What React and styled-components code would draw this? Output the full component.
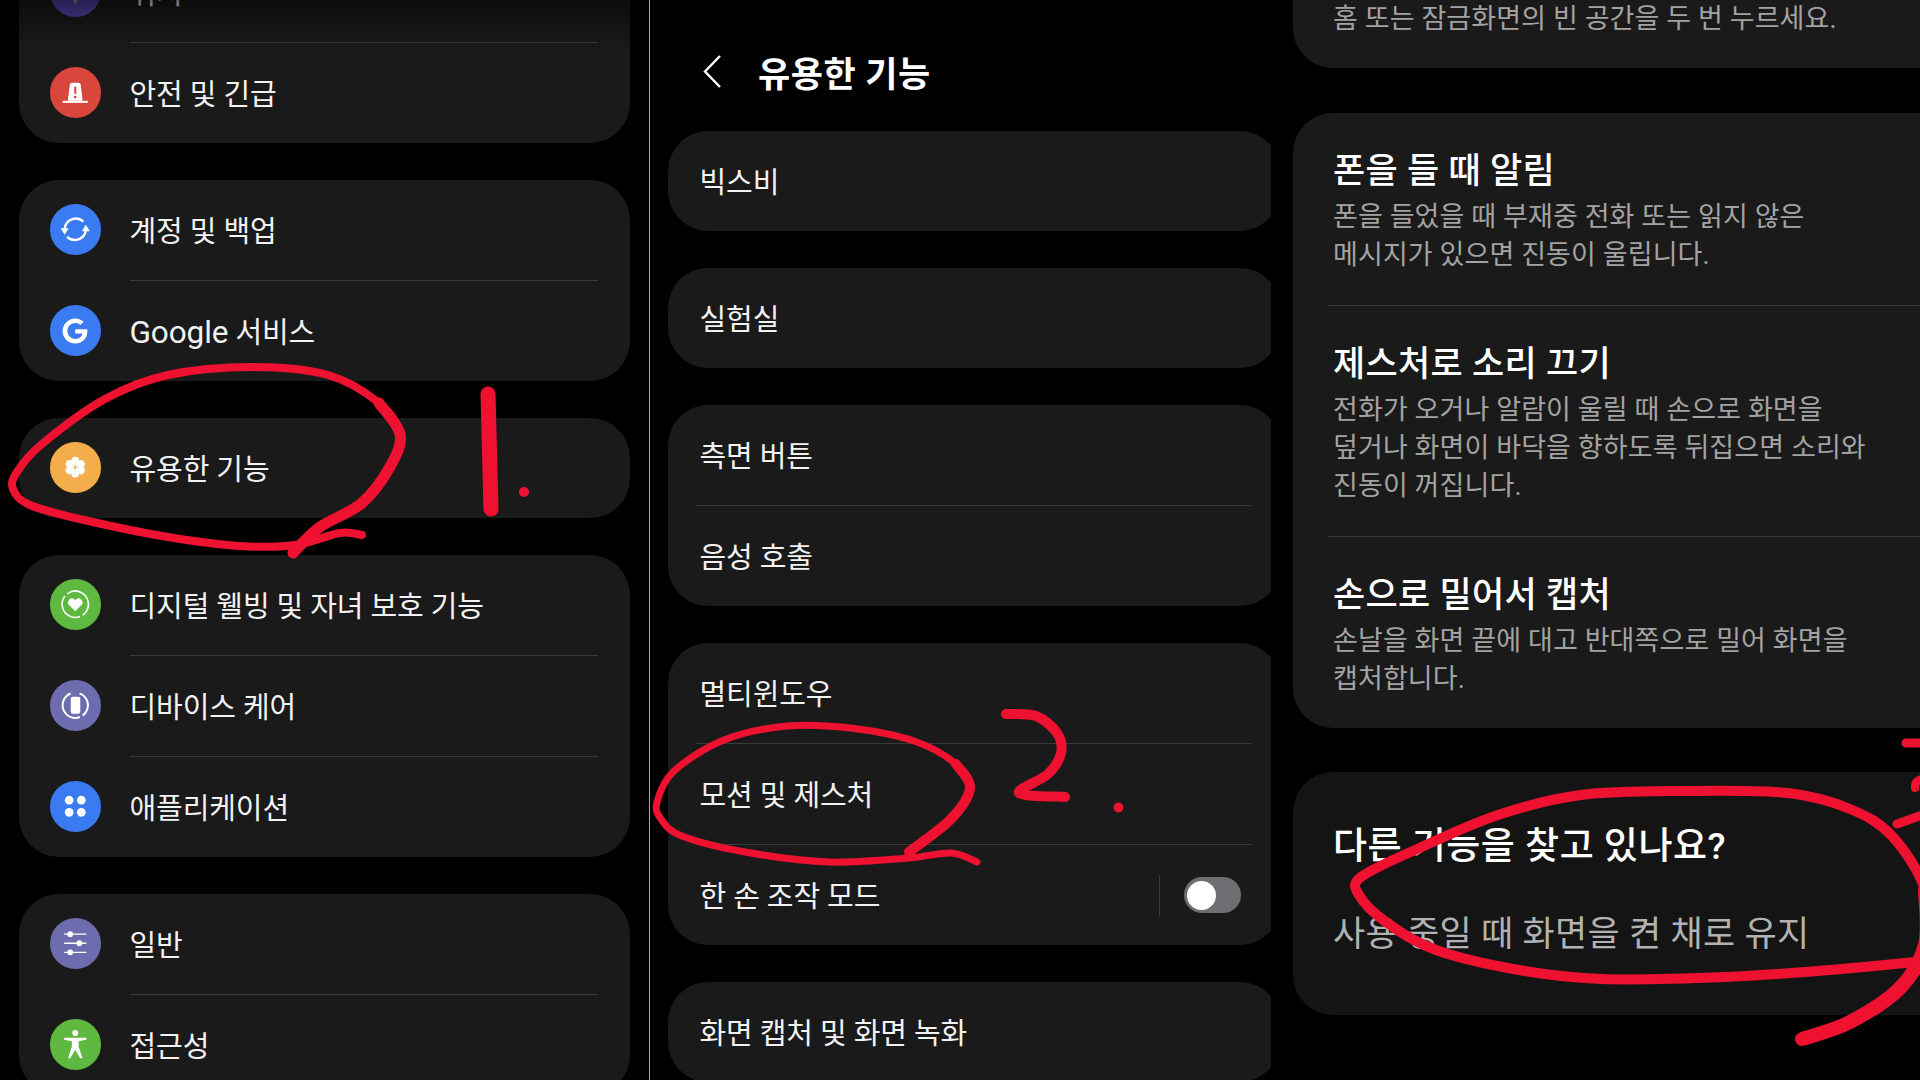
import React from "react";
import styled, { createGlobalStyle } from "styled-components";
import { FaGoogle } from "react-icons/fa";

const GlobalStyle = createGlobalStyle`
  html, body {
    margin: 0;
    background: #000;
    overflow: hidden;
  }
  * {
    box-sizing: border-box;
  }
`;

const Screen = styled.div`
  position: relative;
  display: grid;
  grid-template-columns: 649px 1px 621px 649px;
  width: 1920px;
  height: 1080px;
  overflow: hidden;
  background: #000;
  font-family: Roboto, "Noto Sans CJK KR", sans-serif;
  color: #f2f2f2;
`;

const LeftPanel = styled.section`
  position: relative;
  display: flex;
  flex-direction: column;
  gap: 37px;
  margin-top: -58.5px;
  padding: 0 19px 0 18.5px;
`;

const TopFade = styled.div`
  position: absolute;
  top: 58.5px;
  left: 0;
  right: 0;
  height: 50px;
  background: linear-gradient(to bottom, rgba(0, 0, 0, 0.55), rgba(0, 0, 0, 0));
`;

const PanelLine = styled.div`
  background: #a9a9a9;
`;

const MiddlePanel = styled.section`
  display: flex;
  flex-direction: column;
  gap: 37px;
  padding-left: 18px;
  overflow: hidden;
`;

const RightPanel = styled.section`
  display: flex;
  flex-direction: column;
  gap: 44.5px;
  padding-left: 22px;
  overflow: hidden;
`;

const Header = styled.header`
  display: flex;
  align-items: center;
  gap: 37px;
  flex: none;
  height: 94px;
  margin-top: 24.5px;
  margin-bottom: -24.5px;
  padding-left: 35px;
`;

const Title = styled.h1`
  margin: 0;
  font-size: 35px;
  font-weight: 700;
  letter-spacing: 0.5px;
  color: #fff;
`;

const Card = styled.div`
  flex: none;
  background: #1a1a1a;
  border-radius: 40px;
`;

const WideCard = styled(Card)`
  width: 612px;
`;

const BleedCard = styled(Card)`
  width: 720px;
  background: ${(p) => (p.$dim ? "#141414" : "#1a1a1a")};
`;

const TopCard = styled(BleedCard)`
  height: 188px;
  margin-top: -120px;
  padding: 120px 0 0 40px;
`;

const Row = styled.div`
  display: flex;
  align-items: center;
  gap: 29px;
  height: 100px;
  padding: 0 0 2px 31.5px;
  font-size: 29px;
  letter-spacing: -0.1px;
`;

const IconRow = styled(Row)`
  padding-bottom: 0;
`;

const Label = styled.span`
  flex: 1;
  padding-bottom: 2px;
`;

const Latin = styled.span`
  font-size: 31.5px;
`;

const Rule = styled.div`
  height: 1px;
  background: #3a3a3a;
  margin: 0 32px 0 111px;
`;

const MiddleRule = styled(Rule)`
  margin: 0 29.5px 0 27.5px;
`;

const RightRule = styled(Rule)`
  margin: 0 0 0 35px;
`;

const IconCircle = styled.span`
  display: block;
  flex: none;
  width: 50.5px;
  height: 50.5px;
  border-radius: 50%;
  background: ${(p) => p.$color};
  overflow: hidden;
  color: #fff;

  svg {
    display: block;
    width: 100%;
    height: 100%;
  }
`;

const GoogleCircle = styled(IconCircle)`
  display: flex;
  align-items: center;
  justify-content: center;

  svg {
    width: 26px;
    height: 26px;
  }
`;

const Separator = styled.span`
  width: 1px;
  height: 41px;
  background: #3c3c3c;
`;

const Toggle = styled.span`
  display: flex;
  align-items: center;
  flex: none;
  width: 57px;
  height: 36px;
  margin: 0 39.5px 0 -5px;
  padding-left: 3px;
  border-radius: 18px;
  background: #6d6d72;
`;

const Thumb = styled.span`
  display: block;
  width: 29px;
  height: 29px;
  border-radius: 50%;
  background: #fff;
`;

const FeatureItem = styled.div`
  padding: 34px 0 30.5px 40px;

  &:last-child {
    padding-bottom: 29.5px;
  }
`;

const FeatureTitle = styled.div`
  height: 47px;
  line-height: 49px;
  margin-bottom: 4.5px;
  font-size: 35px;
  font-weight: 500;
  letter-spacing: 0.3px;
  color: #fff;
`;

const FeatureText = styled.div`
  font-size: 27px;
  line-height: 38px;
  letter-spacing: 0.1px;
  color: #a3a3a3;
  white-space: pre;
`;

const SearchTitle = styled.div`
  height: 47px;
  line-height: 47px;
  margin: 50.5px 0 41.5px 40px;
  font-size: 37px;
  font-weight: 500;
  letter-spacing: 0.5px;
  color: #fff;
`;

const SearchLink = styled.div`
  height: 47px;
  line-height: 47px;
  margin: 0 0 57px 40px;
  font-size: 35px;
  letter-spacing: 0.3px;
  color: #b2b2b2;
`;

const Ink = styled.svg`
  position: absolute;
  top: 0;
  left: 0;
  width: 1920px;
  height: 1080px;
  pointer-events: none;

  path {
    fill: none;
    stroke: #ef1230;
    stroke-linecap: round;
    stroke-linejoin: round;
  }
  circle {
    fill: #ef1230;
  }
`;

// catmull-rom through the traced points of a pen stroke
const smooth = (pts) => {
  let d = `M${pts[0][0]} ${pts[0][1]}`;
  for (let i = 0; i < pts.length - 1; i++) {
    const p0 = pts[i - 1] || pts[i];
    const p1 = pts[i];
    const p2 = pts[i + 1];
    const p3 = pts[i + 2] || p2;
    const c1 = [p1[0] + (p2[0] - p0[0]) / 6, p1[1] + (p2[1] - p0[1]) / 6];
    const c2 = [p2[0] - (p3[0] - p1[0]) / 6, p2[1] - (p3[1] - p1[1]) / 6];
    d += ` C${c1[0]} ${c1[1]} ${c2[0]} ${c2[1]} ${p2[0]} ${p2[1]}`;
  }
  return d;
};

const loopOne = [
  [362, 535], [340, 533], [295, 545], [240, 546], [168, 537], [84, 520], [30, 505], [13, 489],
  [17, 472], [42, 444], [105, 399], [168, 375], [252, 367], [328, 375], [379, 403], [400, 434],
  [391, 465], [362, 503], [320, 527], [293, 553],
];
const loopTwo = [
  [977, 862], [951, 853], [909, 858], [829, 862], [745, 852], [682, 836], [661, 819], [657, 802],
  [674, 771], [724, 740], [787, 726], [850, 728], [914, 741], [956, 764], [970, 788], [951, 819],
  [909, 852],
];
const numberTwo = [
  [1006, 714], [1036, 716], [1057, 733], [1061, 753], [1048, 774], [1019, 793], [1065, 797],
];
const loopThree = [
  [1802, 1039], [1850, 1022], [1900, 988], [1925, 945], [1925, 890], [1892, 836], [1850, 809],
  [1788, 793], [1685, 791], [1581, 795], [1498, 815], [1415, 850], [1361, 877], [1359, 895],
  [1386, 922], [1436, 950], [1519, 970], [1602, 979], [1726, 977], [1830, 970], [1925, 961],
];

const Tower = () => (
  <svg viewBox="0 0 50 50">
    <path d="M19.5 18q0-2.500 2.500-2.500h6q2.500 0 2.500 2.500l1.800 15.500h-14.600z" fill="#fff" />
    <rect x="12.500" y="33.500" width="25" height="2" fill="#fff" />
    <rect x="24" y="19.500" width="2" height="7" fill="#d9463b" />
    <circle cx="25" cy="29.800" r="1.400" fill="#d9463b" />
  </svg>
);

const Sync = () => (
  <svg viewBox="0 0 50 50" fill="none" stroke="#fff" strokeWidth="2.400">
    <path d="M14.500 24.500A11 11 0 0 1 33 17.500" />
    <path d="M35.500 26A11 11 0 0 1 17 32.500" />
    <path d="M10.500 24h8l-4 6.500z" fill="#fff" stroke="none" />
    <path d="M31.500 27h8l-4-6.500z" fill="#fff" stroke="none" />
  </svg>
);

const Flower = () => (
  <svg viewBox="0 0 50 50">
    {[0, 60, 120, 180, 240, 300].map((a) => (
      <circle key={a} cx="25" cy="18.500" r="3.800" fill="#fff" transform={`rotate(${a} 25 25)`} />
    ))}
    <circle cx="25" cy="25" r="5.800" fill="#fff" />
    <path d="M25 22.500v5M22.500 25h5" stroke="#f3ae4b" strokeWidth="1.200" />
  </svg>
);

const Wellbeing = () => (
  <svg viewBox="0 0 50 50">
    <circle cx="25" cy="25" r="13" fill="none" stroke="#fff" strokeWidth="1.600" strokeDasharray="26 3 34 3 16 0" transform="rotate(-60 25 25)" />
    <path d="M25 32l-6.200-6.200a3.900 3.900 0 0 1 5.500-5.500l.7.7.7-.7a3.900 3.900 0 0 1 5.500 5.500z" fill="#fff" />
  </svg>
);

const DeviceCare = () => (
  <svg viewBox="0 0 50 50">
    <circle cx="25" cy="25" r="12.500" fill="none" stroke="#fff" strokeWidth="2" strokeDasharray="27 3 39 10" transform="rotate(-70 25 25)" />
    <rect x="20.500" y="16.500" width="9.500" height="17" rx="2" fill="#fff" />
  </svg>
);

const Apps = () => (
  <svg viewBox="0 0 50 50" fill="#fff">
    <circle cx="19" cy="19" r="4.300" />
    <circle cx="31" cy="19" r="4.300" />
    <circle cx="19" cy="31" r="4.300" />
    <circle cx="31" cy="31" r="4.300" />
  </svg>
);

const Sliders = () => (
  <svg viewBox="0 0 50 50" fill="#fff" stroke="#fff" strokeWidth="1.300">
    <path d="M14 16h22M14 25h22M14 34h22" />
    <circle cx="20" cy="16" r="2.200" />
    <circle cx="29" cy="25" r="2.200" />
    <circle cx="20" cy="34" r="2.200" />
  </svg>
);

const Person = () => (
  <svg viewBox="0 0 50 50" fill="#fff">
    <circle cx="25" cy="13.800" r="3" />
    <path d="M14 18.500h22v2l-7.600 1.600v5.400l3.800 11.300h-2.300L25 30.500l-4.900 8.300h-2.300l3.800-11.300v-5.400L14 20.500z" />
  </svg>
);

const Pin = () => (
  <svg viewBox="0 0 50 50">
    <path d="M25 38l-8-13a9.500 9.500 0 1 1 16 0z" fill="#9a96a8" />
  </svg>
);

const SettingRow = ({ color, icon, children }) => (
  <IconRow>
    <IconCircle $color={color}>{icon}</IconCircle>
    <Label>{children}</Label>
  </IconRow>
);

export default function App() {
  return (
    <Screen>
      <GlobalStyle />

      <LeftPanel>
        <Card>
          <SettingRow color="#5a46b4" icon={<Pin />}>위치</SettingRow>
          <Rule />
          <SettingRow color="#d9463b" icon={<Tower />}>안전 및 긴급</SettingRow>
        </Card>
        <Card>
          <SettingRow color="#3a7bf1" icon={<Sync />}>계정 및 백업</SettingRow>
          <Rule />
          <IconRow>
            <GoogleCircle $color="#3a7bf1"><FaGoogle /></GoogleCircle>
            <Label><Latin>Google</Latin> 서비스</Label>
          </IconRow>
        </Card>
        <Card>
          <SettingRow color="#f3ae4b" icon={<Flower />}>유용한 기능</SettingRow>
        </Card>
        <Card>
          <SettingRow color="#5fb840" icon={<Wellbeing />}>디지털 웰빙 및 자녀 보호 기능</SettingRow>
          <Rule />
          <SettingRow color="#6c6cae" icon={<DeviceCare />}>디바이스 케어</SettingRow>
          <Rule />
          <SettingRow color="#3a7bf1" icon={<Apps />}>애플리케이션</SettingRow>
        </Card>
        <Card>
          <SettingRow color="#6c6cae" icon={<Sliders />}>일반</SettingRow>
          <Rule />
          <SettingRow color="#5fb840" icon={<Person />}>접근성</SettingRow>
        </Card>
        <TopFade />
      </LeftPanel>

      <PanelLine />

      <MiddlePanel>
        <Header>
          <svg width="18" height="33" viewBox="0 0 18 33" fill="none" stroke="#fff" strokeWidth="2.400" style={{ flex: "none" }}>
            <path d="M17 1L2 16.500 17 32" />
          </svg>
          <Title>유용한 기능</Title>
        </Header>
        <WideCard><Row>빅스비</Row></WideCard>
        <WideCard><Row>실험실</Row></WideCard>
        <WideCard>
          <Row>측면 버튼</Row>
          <MiddleRule />
          <Row>음성 호출</Row>
        </WideCard>
        <WideCard>
          <Row>멀티윈도우</Row>
          <MiddleRule />
          <Row>모션 및 제스처</Row>
          <MiddleRule />
          <IconRow>
            <Label>한 손 조작 모드</Label>
            <Separator />
            <Toggle><Thumb /></Toggle>
          </IconRow>
        </WideCard>
        <WideCard><Row>화면 캡처 및 화면 녹화</Row></WideCard>
      </MiddlePanel>

      <RightPanel>
        <TopCard>
          <FeatureText>홈 또는 잠금화면의 빈 공간을 두 번 누르세요.</FeatureText>
        </TopCard>
        <BleedCard>
          <FeatureItem>
            <FeatureTitle>폰을 들 때 알림</FeatureTitle>
            <FeatureText>폰을 들었을 때 부재중 전화 또는 읽지 않은{"\n"}메시지가 있으면 진동이 울립니다.</FeatureText>
          </FeatureItem>
          <RightRule />
          <FeatureItem>
            <FeatureTitle>제스처로 소리 끄기</FeatureTitle>
            <FeatureText>전화가 오거나 알람이 울릴 때 손으로 화면을{"\n"}덮거나 화면이 바닥을 향하도록 뒤집으면 소리와{"\n"}진동이 꺼집니다.</FeatureText>
          </FeatureItem>
          <RightRule />
          <FeatureItem>
            <FeatureTitle>손으로 밀어서 캡처</FeatureTitle>
            <FeatureText>손날을 화면 끝에 대고 반대쪽으로 밀어 화면을{"\n"}캡처합니다.</FeatureText>
          </FeatureItem>
        </BleedCard>
        <BleedCard $dim>
          <SearchTitle>다른 기능을 찾고 있나요?</SearchTitle>
          <SearchLink>사용 중일 때 화면을 켠 채로 유지</SearchLink>
        </BleedCard>
      </RightPanel>

      <Ink viewBox="0 0 1920 1080">
        <path d={smooth(loopOne)} strokeWidth="8" />
        <path d={smooth(loopOne.slice(14))} strokeWidth="11" />
        <path d="M488 394L491 509" strokeWidth="15" />
        <circle cx="524" cy="492" r="5" />
        <path d={smooth(loopTwo)} strokeWidth="7" />
        <path d={smooth(loopTwo.slice(13))} strokeWidth="10" />
        <path d={smooth(numberTwo)} strokeWidth="10" />
        <circle cx="1118.500" cy="807.500" r="5" />
        <path d={smooth(loopThree)} strokeWidth="10" />
        <path d={smooth(loopThree.slice(0, 5))} strokeWidth="14" />
        <path d="M1906 743L1925 743" strokeWidth="9" />
        <path d="M1925 778Q1914 780 1915 788" strokeWidth="8" />
        <path d="M1897 824L1925 814" strokeWidth="9" />
      </Ink>
    </Screen>
  );
}
